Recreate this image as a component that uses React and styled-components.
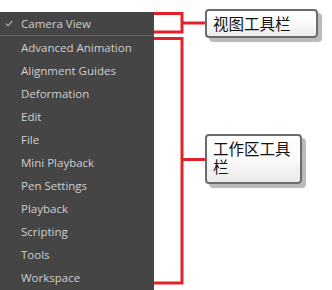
import React from "react";
import styled, { createGlobalStyle } from "styled-components";

const Global = createGlobalStyle`
  html, body { margin: 0; padding: 0; background: #ffffff; }
  body { font-family: "Open Sans", "Noto Sans", sans-serif; }
`;

const Stage = styled.div`
  position: relative;
  width: 332px;
  height: 290px;
  overflow: hidden;
  background: #ffffff;
`;

const Menu = styled.ul`
  list-style: none;
  margin: 12px 0 0 0;
  padding: 0;
  width: 154px;
  height: 278px;
  background: #454545;
  display: flex;
  flex-direction: column;
`;

const Item = styled.li`
  position: relative;
  height: 23px;
  display: flex;
  align-items: center;
  padding-left: 21px;
  font-family: "Open Sans", "Noto Sans", sans-serif;
  font-size: 11.5px;
  color: #cfcfcf;
  white-space: nowrap;
  border-bottom: ${(p) => (p.$sep ? "1px solid #5e5e5e" : "none")};
  box-sizing: content-box;
`;

const Check = styled.svg`
  position: absolute;
  left: 5px;
  top: 8px;
`;

const Overlay = styled.svg`
  position: absolute;
  left: 0;
  top: 0;
  pointer-events: none;
`;

const Callout = styled.div`
  position: absolute;
  left: ${(p) => p.$x}px;
  top: ${(p) => p.$y}px;
  width: ${(p) => p.$w}px;
  height: ${(p) => p.$h}px;
  box-sizing: border-box;
  border: 2px solid #6b6b6b;
  border-radius: 4px;
  background: linear-gradient(#ffffff 0%, #fbfbfb 50%, #e9e9e9 100%);
  box-shadow: 4px 4px 1px #b9b9b9;
  padding: 3px 0 0 6px;
  font-family: "Noto Sans CJK SC", "Noto Sans CJK JP", sans-serif;
  font-size: 15.5px;
  line-height: 18px;
  color: #111111;
  word-break: break-all;
`;

const items = [
  "Advanced Animation",
  "Alignment Guides",
  "Deformation",
  "Edit",
  "File",
  "Mini Playback",
  "Pen Settings",
  "Playback",
  "Scripting",
  "Tools",
  "Workspace",
];

const RED = "#e4202a";

export default function App() {
  return (
    <>
      <Global />
      <Stage>
        <Menu>
          <Item $sep>
            <Check width="8" height="7" viewBox="0 0 8 7">
              <polyline points="0.8,3.6 3,5.8 7.3,0.8" fill="none" stroke="#a8a8a8" strokeWidth="1.3" />
            </Check>
            Camera View
          </Item>
          {items.map((t) => (
            <Item key={t}>{t}</Item>
          ))}
        </Menu>
        <Overlay width="332" height="290" viewBox="0 0 332 290">
          <g fill="none" stroke={RED} strokeWidth="3" strokeLinejoin="miter">
            <polyline points="154,13.5 182,13.5 182,32 154,32" />
            <line x1="182" y1="23" x2="207" y2="23" />
            <polyline points="154,38.5 182,38.5 182,283 154,283" />
            <line x1="182" y1="159.5" x2="207" y2="159.5" />
          </g>
        </Overlay>
        <Callout $x={205} $y={9} $w={113} $h={29}>视图工具栏</Callout>
        <Callout $x={205} $y={134} $w={97} $h={50}>工作区工具栏</Callout>
      </Stage>
    </>
  );
}
